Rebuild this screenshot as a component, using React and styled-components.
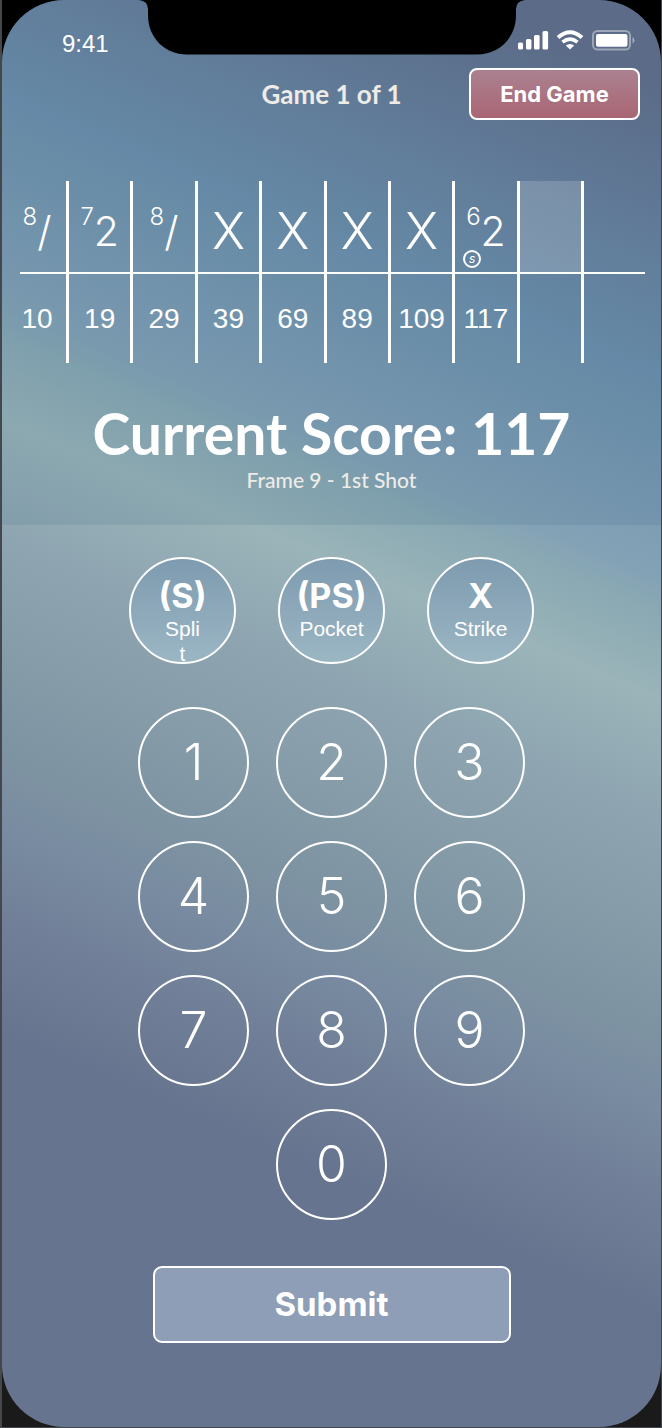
import React from "react";
import styled, { createGlobalStyle } from "styled-components";

const display = `Inter, "Liberation Sans", sans-serif`;
const heading = `Lato, "Open Sans", sans-serif`;
const body = `"Liberation Sans", Arial, sans-serif`;

const GlobalStyle = createGlobalStyle`
  * { box-sizing: border-box; }
  body { margin: 0; background: #44484c; }
  button { margin: 0; padding: 0; color: #fff; cursor: pointer; }
`;

const Device = styled.div`
  min-height: 100vh;
  padding: 0 1px 1px 2px;
`;

const Bezel = styled.div`
  background: linear-gradient(#000 50%, #1a1a1a 50%);
`;

const Screen = styled.main`
  position: relative;
  display: flex;
  flex-direction: column;
  min-height: calc(100vh - 1px);
  overflow: hidden;
  border-radius: 62px;
  color: #fff;
  background: linear-gradient(
    203deg,
    #626e8a 5%,
    #6e90ac 22%,
    #84a2b6 34%,
    #8aa9b3 36%,
    #9ab4b9 41%,
    #8ea5b1 48%,
    #7f94a2 60%,
    #788ba1 65%,
    #718098 70%,
    #67748f 77%,
    #67748f 100%
  );
`;

const ScorePanel = styled.section`
  display: flex;
  flex-direction: column;
  height: 525px;
  background: rgba(40, 90, 120, 0.12);
`;

const StatusBar = styled.div`
  display: flex;
  justify-content: space-between;
  height: 68px;
  padding: 28px 25px 0 60px;
`;

const Notch = styled.svg`
  position: absolute;
  top: 0;
  left: 50%;
  transform: translateX(-50%);
`;

const Clock = styled.time`
  font: 24px/32px ${body};
`;

const StatusIcons = styled.svg`
  display: block;
`;

const Header = styled.header`
  display: grid;
  grid-template-columns: 1fr auto 1fr;
  align-items: center;
  padding: 0 21px;
`;

const GameTitle = styled.h1`
  grid-column: 2;
  margin: 0;
  font: 700 26px/32px ${heading};
  color: #efebe7;
`;

const EndButton = styled.button`
  justify-self: end;
  width: 171px;
  height: 52px;
  border: 2px solid #fff;
  border-radius: 8px;
  background: linear-gradient(#ab8191, #a96674);
  font: 700 22px/28px ${display};
`;

const ScoreTable = styled.table`
  width: calc(100% - 34px);
  margin: 61px 16px 0 18px;
  border-spacing: 0;
  table-layout: fixed;
`;

const Frame = styled.td`
  position: relative;
  height: 93px;
  padding: 0;
  border-bottom: 2px solid #fff;
  border-right: ${(p) => (p.$last ? "0" : "3px solid #fff")};
  background: ${(p) => (p.$active ? "rgba(255, 255, 255, 0.17)" : "transparent")};
  vertical-align: top;
  &:first-child { padding-right: 12px; }
`;

const Shots = styled.div`
  display: flex;
  justify-content: center;
  padding-top: 14px;
`;

const First = styled.span`
  font: 300 24px/44px ${display};
`;

const Second = styled.span`
  font: 300 ${(p) => (p.$strike ? 50 : 41)}px/72px ${display};
`;

const SplitMark = styled.span`
  position: absolute;
  left: 8px;
  bottom: 4px;
  width: 18px;
  height: 18px;
  border: 2px solid #fff;
  border-radius: 50%;
  font: italic 12px/13px ${display};
  text-align: center;
`;

const Total = styled.td`
  height: 89px;
  padding: 0;
  border-right: ${(p) => (p.$last ? "0" : "3px solid #fff")};
  font: 28px/32px ${body};
  text-align: center;
  &:first-child { padding-right: 12px; }
`;

const Column = styled.col`
  &:first-child { width: 49px; }
  &:last-child { width: 61px; }
`;

const Summary = styled.div`
  padding-top: 36px;
  text-align: center;
`;

const Score = styled.h2`
  margin: 0;
  font: 700 57px/68px ${heading};
`;

const Shot = styled.p`
  margin: 0;
  font: 500 21px/26px ${heading};
  color: #efebe7;
`;

const Specials = styled.div`
  display: flex;
  justify-content: center;
  gap: 42px;
  padding-top: 32px;
`;

const SpecialButton = styled.button`
  display: flex;
  flex-direction: column;
  align-items: center;
  width: 107px;
  height: 107px;
  padding-top: 17px;
  overflow: hidden;
  border: 2px solid #fff;
  border-radius: 50%;
  background: linear-gradient(#7e9bb0, #9bb6c3);
`;

const Symbol = styled.span`
  font: 700 34px/40px ${display};
`;

const Caption = styled.span`
  width: ${(p) => (p.$narrow ? "38px" : "auto")};
  font: 21px/25px ${body};
  overflow-wrap: anywhere;
`;

const Keypad = styled.div`
  display: grid;
  grid-template-columns: repeat(3, 111px);
  justify-content: center;
  gap: 23px 27px;
  padding-top: 43px;
`;

const Key = styled.button`
  height: 111px;
  padding-bottom: 2px;
  border: 2px solid #fff;
  border-radius: 50%;
  background: transparent;
  font: 300 50px/68px ${display};
  &:last-child { grid-column: 2; }
`;

const SubmitButton = styled.button`
  align-self: center;
  width: 358px;
  height: 77px;
  margin: 46px 0 84px;
  padding-bottom: 2px;
  border: 2px solid #fff;
  border-radius: 9px;
  background: #8d9eb6;
  font: 700 33px/40px ${display};
`;

const frames = [
  { first: "8", second: "/", total: 10 },
  { first: "7", second: "2", total: 19 },
  { first: "8", second: "/", total: 29 },
  { second: "X", total: 39 },
  { second: "X", total: 69 },
  { second: "X", total: 89 },
  { second: "X", total: 109 },
  { first: "6", second: "2", total: 117, split: true },
  { active: true },
  {},
];

const specials = [
  { symbol: "(S)", caption: "Split", narrow: true },
  { symbol: "(PS)", caption: "Pocket" },
  { symbol: "X", caption: "Strike" },
];

export default function App() {
  const last = frames.length - 1;
  return (
    <Device>
      <GlobalStyle />
      <Bezel>
        <Screen>
          <Notch width="386" height="55" viewBox="0 0 386 55" aria-hidden="true">
            <path d="M0 0Q9 1 9 9V15C9 38 26 54.500 48 54.500H338C360 54.500 377 38 377 15V9Q377 1 386 0Z" />
          </Notch>
          <ScorePanel>
            <StatusBar>
              <Clock>9:41</Clock>
              <StatusIcons width="118" height="24" viewBox="0 0 118 24" aria-label="Signal, Wi-Fi and battery">
                <g fill="#fff">
                  <rect x="0" y="14.500" width="5" height="7" rx="1.500" />
                  <rect x="8" y="11" width="5.400" height="10.500" rx="1.500" />
                  <rect x="16" y="7" width="5.600" height="14.500" rx="1.500" />
                  <rect x="24.500" y="3" width="5.600" height="18.500" rx="1.500" />
                </g>
                <g fill="none" stroke="#fff" strokeWidth="4">
                  <path d="M40 9.500Q52 -1 64 9.500" />
                  <path d="M44.500 14.200Q52 8.200 59.500 14.200" strokeWidth="3.600" />
                </g>
                <path d="M47.800 17.600Q52 14.300 56.200 17.600L52 21.600Z" fill="#fff" />
                <rect x="75" y="3" width="37" height="18.500" rx="4.500" fill="none" stroke="#fff" strokeOpacity="0.400" strokeWidth="2" />
                <rect x="78" y="6" width="31.500" height="12.700" rx="2" fill="#fff" />
                <path d="M114.500 9Q118.500 12.200 114.500 15.500Z" fill="#fff" opacity="0.450" />
              </StatusIcons>
            </StatusBar>
            <Header>
              <GameTitle>Game 1 of 1</GameTitle>
              <EndButton type="button">End Game</EndButton>
            </Header>
            <ScoreTable>
              <colgroup>
                {frames.map((_, i) => <Column key={i} />)}
              </colgroup>
              <tbody>
                <tr>
                  {frames.map((f, i) => (
                    <Frame key={i} $active={f.active} $last={i === last}>
                      <Shots>
                        {f.first && <First>{f.first}</First>}
                        {f.second && <Second $strike={f.second === "X"}>{f.second}</Second>}
                      </Shots>
                      {f.split && <SplitMark>s</SplitMark>}
                    </Frame>
                  ))}
                </tr>
                <tr>
                  {frames.map((f, i) => (
                    <Total key={i} $last={i === last}>{f.total}</Total>
                  ))}
                </tr>
              </tbody>
            </ScoreTable>
            <Summary>
              <Score>Current Score: 117</Score>
              <Shot>Frame 9 - 1st Shot</Shot>
            </Summary>
          </ScorePanel>
          <Specials>
            {specials.map((s) => (
              <SpecialButton key={s.symbol} type="button">
                <Symbol>{s.symbol}</Symbol>
                <Caption $narrow={s.narrow}>{s.caption}</Caption>
              </SpecialButton>
            ))}
          </Specials>
          <Keypad>
            {[1, 2, 3, 4, 5, 6, 7, 8, 9, 0].map((n) => (
              <Key key={n} type="button">{n}</Key>
            ))}
          </Keypad>
          <SubmitButton type="submit">Submit</SubmitButton>
        </Screen>
      </Bezel>
    </Device>
  );
}
